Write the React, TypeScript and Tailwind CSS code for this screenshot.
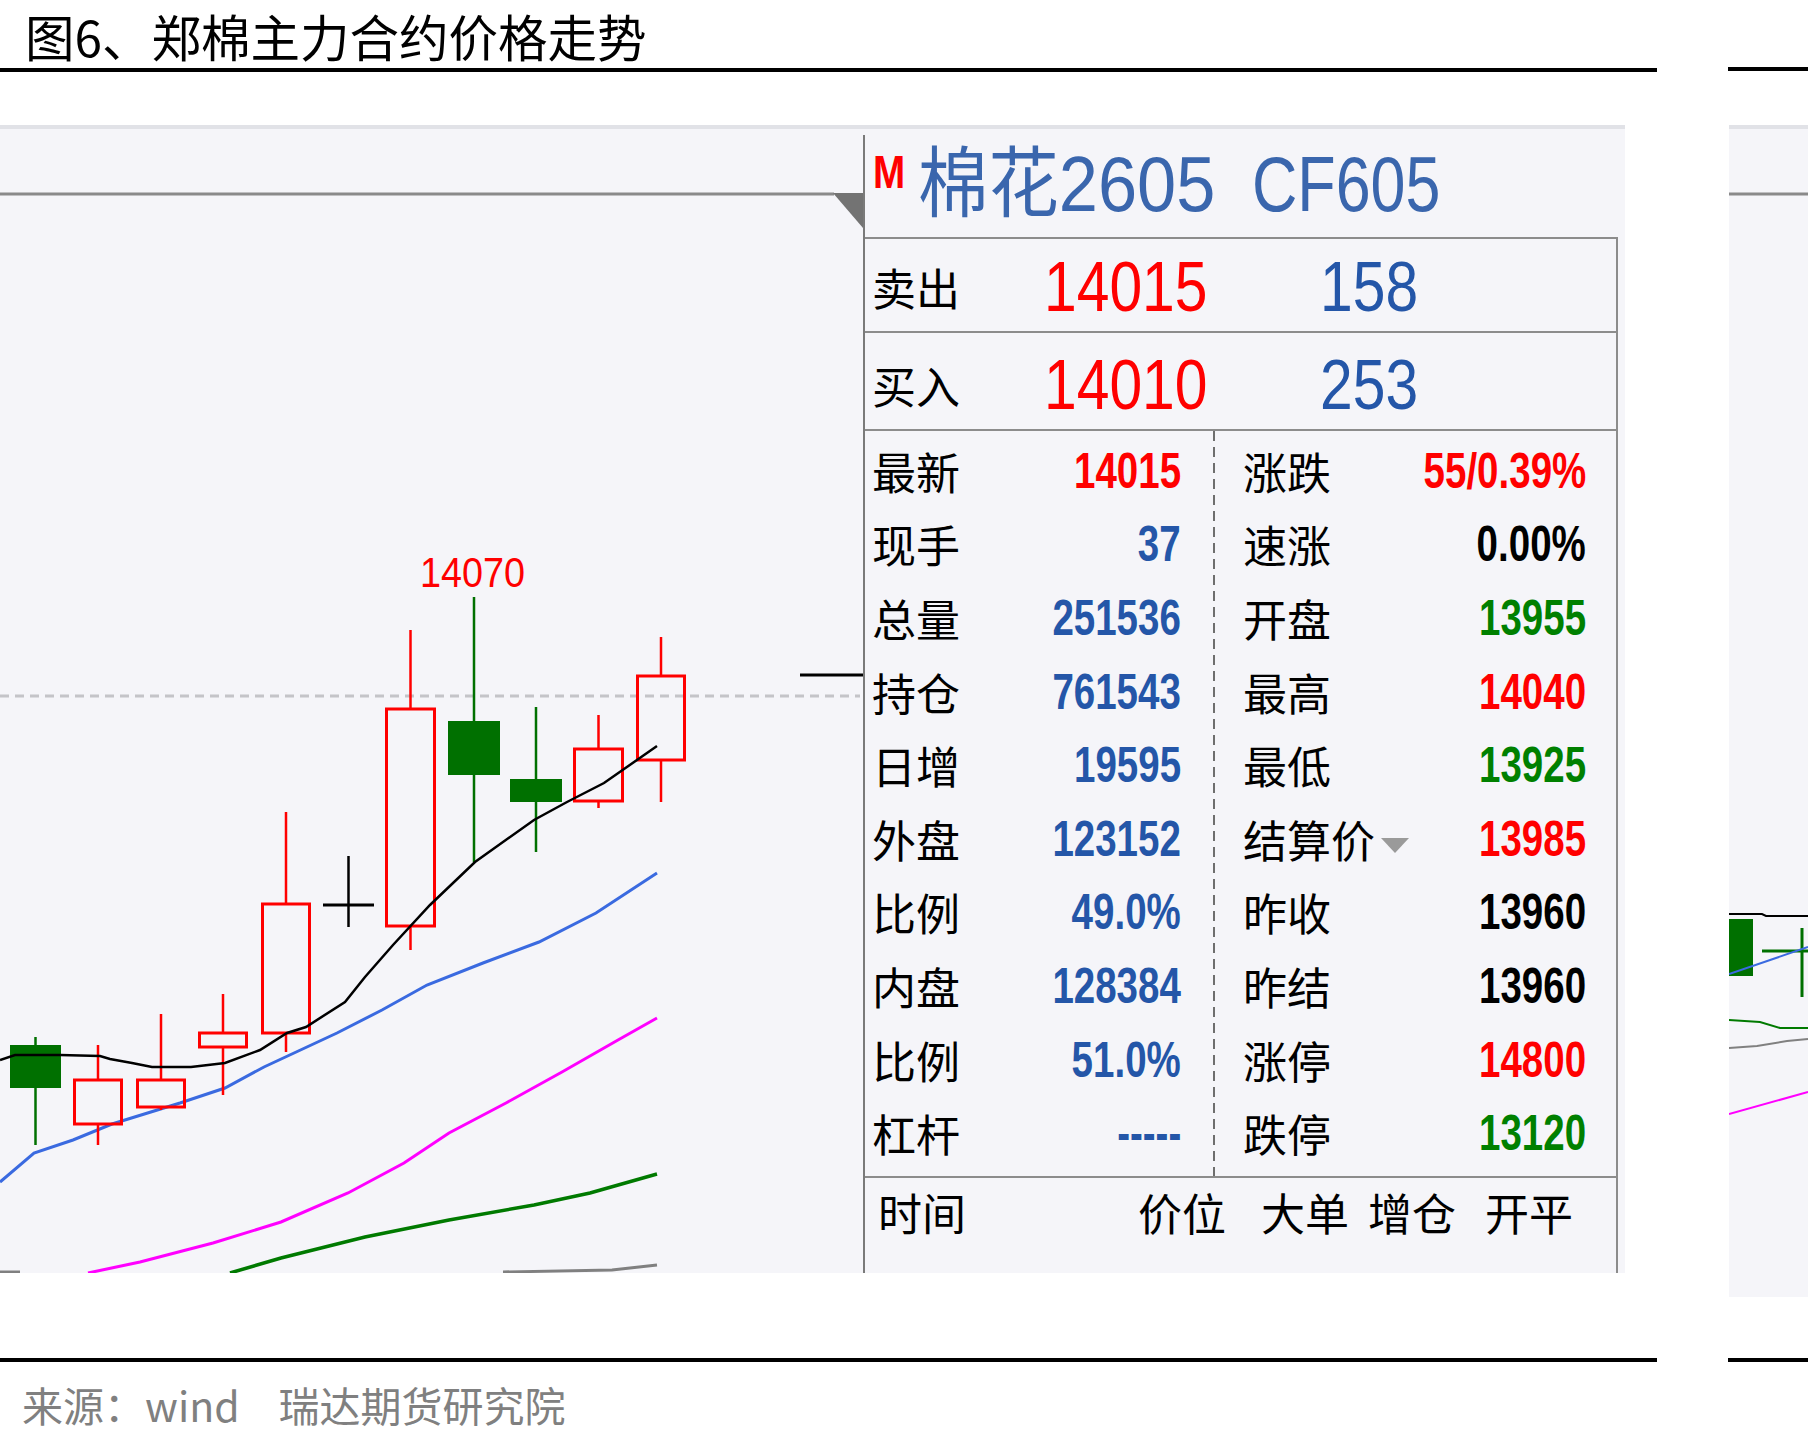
import React from "react";

type Candle = {
  x1: number;
  x2: number;
  top: number;
  bottom: number;
  hi: number;
  lo: number;
  kind: "up" | "down" | "doji";
};

// Daily candles, page coordinates
const candles: Candle[] = [
  { x1: 10, x2: 61, top: 1045, bottom: 1088, hi: 1037, lo: 1145, kind: "down" },
  { x1: 73, x2: 123, top: 1080, bottom: 1124, hi: 1045, lo: 1145, kind: "up" },
  { x1: 136, x2: 186, top: 1080, bottom: 1107, hi: 1014, lo: 1110, kind: "up" },
  { x1: 198, x2: 248, top: 1033, bottom: 1047, hi: 994, lo: 1095, kind: "up" },
  { x1: 261, x2: 311, top: 904, bottom: 1033, hi: 812, lo: 1052, kind: "up" },
  { x1: 323, x2: 374, top: 905, bottom: 905, hi: 856, lo: 927, kind: "doji" },
  { x1: 385, x2: 436, top: 709, bottom: 926, hi: 630, lo: 950, kind: "up" },
  { x1: 448, x2: 500, top: 721, bottom: 775, hi: 597, lo: 862, kind: "down" },
  { x1: 510, x2: 562, top: 779, bottom: 802, hi: 707, lo: 852, kind: "down" },
  { x1: 573, x2: 624, top: 749, bottom: 801, hi: 715, lo: 808, kind: "up" },
  { x1: 636, x2: 686, top: 676, bottom: 760, hi: 637, lo: 802, kind: "up" },
];

const ma5 =
  "0,1060 15,1055 60,1055 100,1056 110,1059 132,1063 152,1067 191,1067 225,1063 260,1050 287,1033 306,1027 345,1002 365,977 393,945 430,905 475,862 534,820 567,802 604,783 657,746";
const ma10 =
  "0,1182 34,1153 73,1140 112,1124 180,1103 225,1088 264,1067 337,1033 382,1010 427,985 483,963 539,942 596,913 657,873";
const ma20 =
  "88,1273 140,1262 213,1243 281,1222 348,1193 404,1163 449,1133 506,1103 562,1072 618,1040 657,1018";
const ma40 =
  "230,1273 281,1258 365,1237 449,1220 534,1205 590,1193 657,1174";

const RED = "#ff0000";
const GREEN = "#007000";

function CandleMark({ c }: { c: Candle }) {
  const cx = (c.x1 + c.x2) / 2;
  if (c.kind === "doji") {
    return (
      <g stroke="#000" strokeWidth={3}>
        <line x1={c.x1} y1={c.top} x2={c.x2} y2={c.top} />
        <line x1={cx} y1={c.hi} x2={cx} y2={c.lo} strokeWidth={2.5} />
      </g>
    );
  }
  if (c.kind === "down") {
    return (
      <g>
        <line x1={cx} y1={c.hi} x2={cx} y2={c.lo} stroke={GREEN} strokeWidth={2.5} />
        <rect x={c.x1} y={c.top} width={c.x2 - c.x1} height={c.bottom - c.top} fill={GREEN} />
      </g>
    );
  }
  return (
    <g stroke={RED} strokeWidth={3} fill="none">
      <line x1={cx} y1={c.hi} x2={cx} y2={c.top} strokeWidth={2.5} />
      <line x1={cx} y1={c.bottom} x2={cx} y2={c.lo} strokeWidth={2.5} />
      <rect x={c.x1 + 1.5} y={c.top} width={c.x2 - c.x1 - 3} height={c.bottom - c.top} />
    </g>
  );
}

function PriceChart() {
  return (
    <svg width={863} height={1144} viewBox="0 129 863 1144" className="block">
      {/* frame line and corner marker */}
      <line x1={0} y1={194} x2={834} y2={194} stroke="#8a8a8a" strokeWidth={3} />
      <polygon points="833,193 863,193 863,228" fill="#737373" />
      {/* current price guide */}
      <line x1={0} y1={696} x2={860} y2={696} stroke="#c4c4c8" strokeWidth={3} strokeDasharray="9 6" />
      <line x1={800} y1={675} x2={863} y2={675} stroke="#000" strokeWidth={3} />
      {/* moving averages */}
      <polyline points={ma40} fill="none" stroke="#007a00" strokeWidth={3.5} />
      <polyline points={ma20} fill="none" stroke="#ff00ff" strokeWidth={3} />
      <polyline points={ma10} fill="none" stroke="#3a6ae0" strokeWidth={3} />
      <line x1={0} y1={1272} x2={20} y2={1272} stroke="#808080" strokeWidth={3} />
      <polyline points="503,1272 612,1270 657,1265" fill="none" stroke="#808080" strokeWidth={3} />
      {candles.map((c, i) => (
        <CandleMark key={i} c={c} />
      ))}
      <polyline points={ma5} fill="none" stroke="#000" strokeWidth={2.5} />
      <text
        x={420}
        y={587}
        fill={RED}
        fontSize={42}
        fontFamily="'Liberation Sans', Arial, sans-serif"
        textLength={105}
        lengthAdjust="spacingAndGlyphs"
      >
        14070
      </text>
    </svg>
  );
}

function SideChart() {
  return (
    <svg width={79} height={1168} viewBox="1729 129 79 1168" className="block">
      <line x1={1729} y1={194} x2={1808} y2={194} stroke="#8a8a8a" strokeWidth={3} />
      <polyline points="1729,914 1762,914 1766,916 1808,916" fill="none" stroke="#000" strokeWidth={2} />
      <rect x={1729} y={919} width={24} height={57} fill={GREEN} />
      <line x1={1762} y1={951} x2={1808} y2={951} stroke={GREEN} strokeWidth={3} />
      <line x1={1802} y1={928} x2={1802} y2={997} stroke={GREEN} strokeWidth={3} />
      <polyline points="1729,974 1808,947" fill="none" stroke="#3a6ae0" strokeWidth={2} />
      <polyline points="1729,1020 1760,1022 1780,1028 1808,1028" fill="none" stroke="#007a00" strokeWidth={2} />
      <polyline points="1729,1048 1757,1046 1787,1041 1808,1039" fill="none" stroke="#808080" strokeWidth={2} />
      <polyline points="1729,1114 1808,1092" fill="none" stroke="#ff00ff" strokeWidth={2} />
    </svg>
  );
}

type Tone = "red" | "blue" | "green" | "black";

const toneClass: Record<Tone, string> = {
  red: "text-[#ff0000]",
  blue: "text-[#2456a8]",
  green: "text-[#008000]",
  black: "text-black",
};

const leftStats: [string, string, Tone][] = [
  ["最新", "14015", "red"],
  ["现手", "37", "blue"],
  ["总量", "251536", "blue"],
  ["持仓", "761543", "blue"],
  ["日增", "19595", "blue"],
  ["外盘", "123152", "blue"],
  ["比例", "49.0%", "blue"],
  ["内盘", "128384", "blue"],
  ["比例", "51.0%", "blue"],
  ["杠杆", "-----", "blue"],
];

const rightStats: [string, string, Tone][] = [
  ["涨跌", "55/0.39%", "red"],
  ["速涨", "0.00%", "black"],
  ["开盘", "13955", "green"],
  ["最高", "14040", "red"],
  ["最低", "13925", "green"],
  ["结算价", "13985", "red"],
  ["昨收", "13960", "black"],
  ["昨结", "13960", "black"],
  ["涨停", "14800", "red"],
  ["跌停", "13120", "green"],
];

const CJK = "font-['Noto_Sans_CJK_SC',sans-serif]";
const NUM = "font-['Liberation_Sans','Noto_Sans_CJK_SC',sans-serif]";

function StatValue({ value, tone }: { value: string; tone: Tone }) {
  return (
    <span
      className={`${NUM} ${toneClass[tone]} inline-block origin-right scale-x-[0.77] text-[50px] font-bold leading-none whitespace-nowrap`}
    >
      {value}
    </span>
  );
}

function StatRow({ label, value, tone, arrow }: { label: string; value: string; tone: Tone; arrow?: boolean }) {
  return (
    <div className="flex h-[73.6px] items-center justify-between">
      <span className={`${CJK} flex items-center text-[44px] leading-none text-black`}>
        {label}
        {arrow && (
          <svg width={28} height={15} viewBox="0 0 28 15" className="ml-[6px] mt-[14px]">
            <polygon points="0,0 28,0 14,15" fill="#9a9a9a" />
          </svg>
        )}
      </span>
      <StatValue value={value} tone={tone} />
    </div>
  );
}

function QuotePanel() {
  return (
    <div className="mt-[6px] flex flex-1 flex-col border-l-2 border-[#7a7a7a]">
      {/* contract header */}
      <div className="flex h-[102px] items-start pl-[8px] pt-[14px]">
        <span className={`${NUM} inline-block w-[38px] origin-left scale-x-[0.84] text-[46px] font-bold leading-none text-[#ff0000]`}>
          M
        </span>
        <span
          className={`${NUM} -mt-[3px] ml-[7px] inline-block w-[334px] origin-left scale-x-[0.914] whitespace-nowrap text-[77px] leading-none text-[#3a66ad]`}
        >
          棉花2605
        </span>
        <span
          className={`${NUM} -mt-[3px] inline-block origin-left scale-x-[0.815] whitespace-nowrap text-[77px] leading-none text-[#3a66ad]`}
        >
          CF605
        </span>
      </div>

      <div className="mr-[7px] flex flex-1 flex-col border-t-2 border-r-2 border-[#8c8c8c]">
        {/* ask / bid */}
        <div className="flex h-[94px] items-center border-b-2 border-[#8c8c8c] pl-[7px] pt-[4px]">
          <span className={`${CJK} w-[172px] text-[44px] leading-none text-black`}>卖出</span>
          <span className={`${NUM} inline-block w-[276px] origin-left scale-x-[0.84] text-[70px] leading-none text-[#ff0000]`}>
            14015
          </span>
          <span className={`${NUM} inline-block origin-left scale-x-[0.84] text-[70px] leading-none text-[#2456a8]`}>
            158
          </span>
        </div>
        <div className="flex h-[98px] items-center border-b-2 border-[#8c8c8c] pl-[7px] pt-[8px]">
          <span className={`${CJK} w-[172px] text-[44px] leading-none text-black`}>买入</span>
          <span className={`${NUM} inline-block w-[276px] origin-left scale-x-[0.84] text-[70px] leading-none text-[#ff0000]`}>
            14010
          </span>
          <span className={`${NUM} inline-block origin-left scale-x-[0.84] text-[70px] leading-none text-[#2456a8]`}>
            253
          </span>
        </div>

        {/* statistics */}
        <div className="flex h-[747px] border-b-2 border-[#8c8c8c]">
          <div className="flex w-[348px] flex-col pl-[7px] pr-[32px] pt-[3px]">
            {leftStats.map(([l, v, t], i) => (
              <StatRow key={i} label={l} value={v} tone={t} />
            ))}
          </div>
          <div className="w-[2px] bg-[repeating-linear-gradient(to_bottom,#6e6e6e_0px,#6e6e6e_10px,transparent_10px,transparent_16px)]" />
          <div className="flex flex-1 flex-col pl-[28px] pr-[30px] pt-[3px]">
            {rightStats.map(([l, v, t], i) => (
              <StatRow key={i} label={l} value={v} tone={t} arrow={l === "结算价"} />
            ))}
          </div>
        </div>

        {/* tick list header */}
        <div className={`${CJK} flex flex-1 items-start pl-[13px] pt-[12px] text-[44px] leading-none text-black`}>
          <span className="w-[260px]">时间</span>
          <span className="w-[123px]">价位</span>
          <span className="w-[107px]">大单</span>
          <span className="w-[117px]">增仓</span>
          <span>开平</span>
        </div>
      </div>
    </div>
  );
}

export default function App() {
  return (
    <div className={`${CJK} relative h-[1441px] w-[1808px] bg-white`}>
      <div className="h-[68px] pl-[25px] pt-[7px] text-[49.5px] leading-[58px] whitespace-nowrap text-black">
        图6、郑棉主力合约价格走势
      </div>
      <div className="flex">
        <div className="h-[4px] w-[1657px] bg-black" />
        <div className="-mt-[1px] ml-[71px] h-[4px] flex-1 bg-black" />
      </div>

      <div className="mt-[53px] flex h-[1172px] items-start">
        <div className="flex h-[1148px] w-[1625px] flex-col bg-[#f5f5f9]">
          <div className="h-[4px] bg-[#e1e2e7]" />
          <div className="flex flex-1">
            <div className="w-[863px]">
              <PriceChart />
            </div>
            <QuotePanel />
          </div>
        </div>
        <div className="ml-[104px] flex h-[1172px] w-[79px] flex-col bg-[#f5f5f9]">
          <div className="h-[4px] bg-[#e1e2e7]" />
          <SideChart />
        </div>
      </div>

      <div className="mt-[61px] flex">
        <div className="h-[4px] w-[1657px] bg-black" />
        <div className="ml-[71px] h-[4px] flex-1 bg-black" />
      </div>
      <div className="pl-[22px] pt-[22px] text-[41px] leading-none text-[#808080]">
        来源：wind<span className="ml-[39px]">瑞达期货研究院</span>
      </div>
    </div>
  );
}
